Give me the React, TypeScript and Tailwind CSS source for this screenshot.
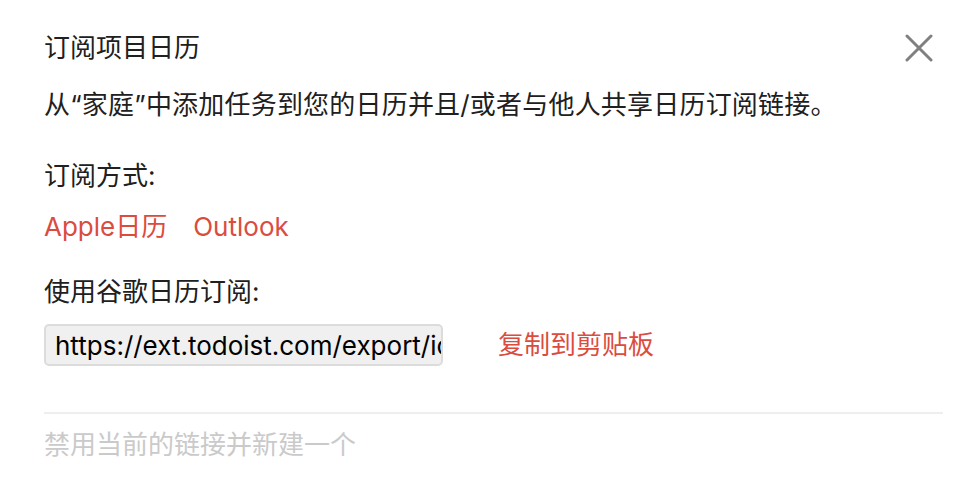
import { useState } from 'react';

const FONT = { fontFamily: 'Inter, "Noto Sans CJK SC", sans-serif' };

export default function App() {
  const [url] = useState('https://ext.todoist.com/export/ical/todoist?user_id=2419834&ical_token=a9f3c1');

  return (
    <div className="h-[482px] w-[974px] bg-white pl-[44px] pr-[31px] pt-[30px] text-[26px] text-[#202020]" style={FONT}>
      <div className="flex items-center justify-between">
        <h1 className="leading-[36px] font-normal">订阅项目日历</h1>
        <button className="mr-[6px] flex h-[36px] w-[36px] items-center justify-center" aria-label="关闭">
          <svg width="28" height="28" viewBox="0 0 28 28" fill="none" stroke="#808080" strokeWidth="3" strokeLinecap="round">
            <path d="M2 2L26 26M26 2L2 26" />
          </svg>
        </button>
      </div>

      <p className="mt-[21px] leading-[36px] tracking-[0.2px]">从“家庭”中添加任务到您的日历并且/或者与他人共享日历订阅链接。</p>

      <p className="mt-[35px] leading-[36px]">订阅方式:</p>
      <div className="mt-[15px] flex gap-[26px] leading-[36px] text-[#db4c3f]">
        <a href="#">Apple日历</a>
        <a href="#">Outlook</a>
      </div>

      <p className="mt-[29px] leading-[36px]">使用谷歌日历订阅:</p>
      <div className="mt-[14px] flex items-center gap-[55px]">
        <input
          readOnly
          value={url}
          className="h-[42px] w-[399px] rounded-[5px] border-2 border-[#dcdcdc] bg-[#f0f0f0] pl-[9px] text-[26px] text-black outline-none"
          style={FONT}
        />
        <a href="#" className="leading-[36px] text-[#db4c3f]">复制到剪贴板</a>
      </div>

      <div className="mt-[46px] h-[2px] bg-[#eeeeee]" />
      <p className="mt-[13px] leading-[36px] text-[#cacaca]">禁用当前的链接并新建一个</p>
    </div>
  );
}
